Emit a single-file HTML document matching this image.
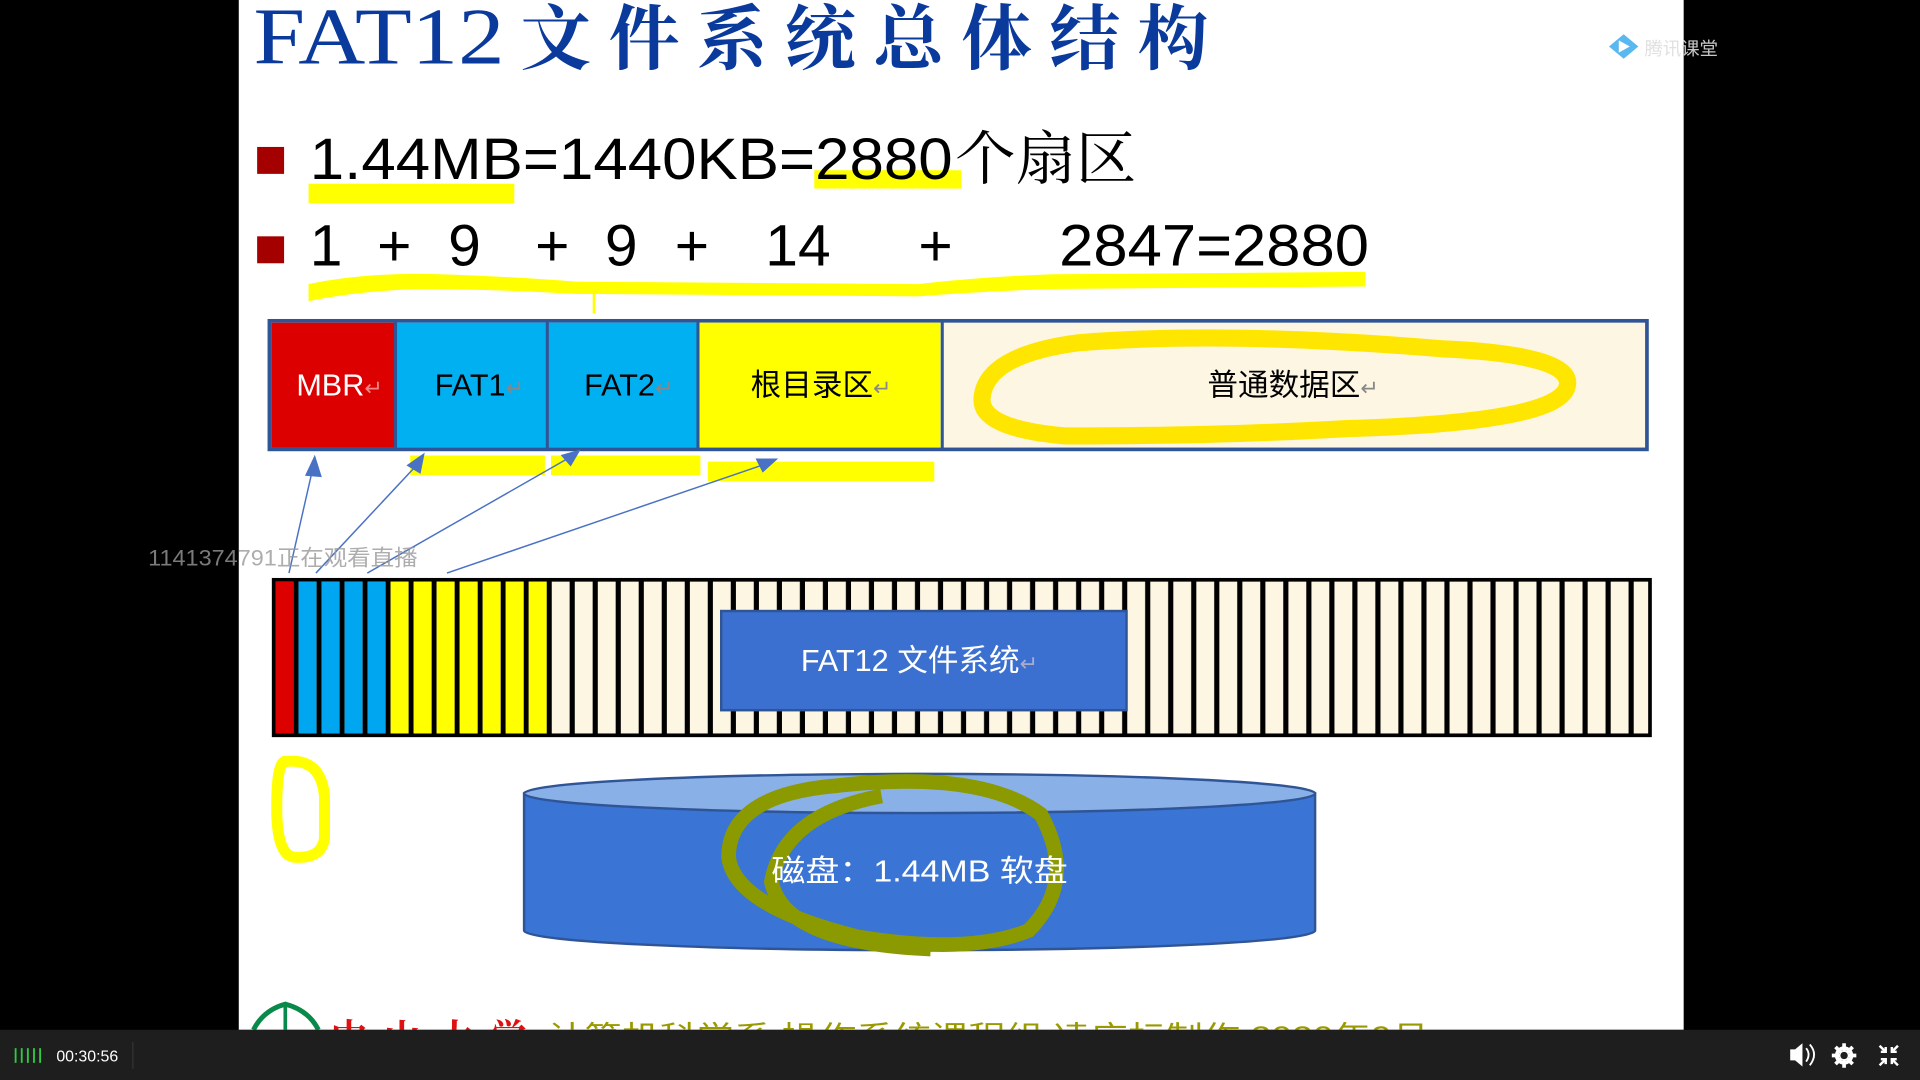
<!DOCTYPE html>
<html><head><meta charset="utf-8"><style>
html,body{margin:0;padding:0;background:#000;width:1920px;height:1080px;overflow:hidden}
svg{display:block}
</style></head><body>
<svg width="1920" height="1080" viewBox="0 0 1568 882" xmlns="http://www.w3.org/2000/svg">
<defs>
<pattern id="cells" patternUnits="userSpaceOnUse" x="223" y="0" width="18.8" height="882">
<rect x="0" y="0" width="18.8" height="882" fill="#000"/>
<rect x="2" y="0" width="14.6" height="882" fill="#fdf6e3"/>
</pattern>
</defs>
<rect width="1568" height="882" fill="#000"/>
<rect x="195" y="0" width="1180" height="841" fill="#fff"/>

<!-- title -->
<text x="207" y="52" font-family="Liberation Serif, serif" font-size="66" fill="#0a3a9c" textLength="205" lengthAdjust="spacingAndGlyphs">FAT12</text>
<text x="425" y="52" font-family="Liberation Serif,'Noto Serif CJK SC',serif" font-size="58" font-weight="bold" fill="#0a3a9c" letter-spacing="14">文件系统总体结构</text>

<!-- watermark logo -->
<path d="M1314 38 L1326 28 L1338 38 L1326 48 Z" fill="#5ab8f0"/>
<path d="M1322 33 L1331 38 L1322 43 Z" fill="#fff"/>
<text x="1343" y="45" font-family="Liberation Sans,'Noto Sans CJK SC',sans-serif" font-size="15" fill="#ddd" opacity="0.9">腾讯课堂</text>

<!-- bullets -->
<rect x="210" y="120" width="22" height="22" fill="#a50000"/>
<rect x="210" y="193" width="22" height="22" fill="#a50000"/>
<rect x="252" y="150" width="168" height="16" fill="#ffff00"/>
<rect x="665" y="139" width="120" height="15" fill="#ffff00"/>
<text x="253" y="146" font-family="Liberation Sans,'Noto Sans CJK SC',sans-serif" font-size="48" fill="#000" textLength="525" lengthAdjust="spacingAndGlyphs">1.44MB=1440KB=2880</text>
<text x="780" y="146" font-family="'Noto Serif CJK SC',serif" font-size="48" fill="#000" textLength="148" lengthAdjust="spacingAndGlyphs">个扇区</text>

<path d="M252 232 Q300 222 360 224 Q420 226 470 230 L750 232 Q800 226 860 224 L1115 222 L1115 234 L860 236 Q800 238 750 242 L470 240 Q400 236 340 236 Q290 238 252 246 Z" fill="#ffff00"/>
<rect x="484" y="240" width="2" height="16" fill="#ffff00"/>
<g font-family="Liberation Sans,sans-serif" font-size="48" fill="#000">
<text x="253" y="217">1</text><text x="308" y="217">+</text><text x="366" y="217">9</text>
<text x="437" y="217">+</text><text x="494" y="217">9</text><text x="551" y="217">+</text>
<text x="625" y="217">14</text><text x="750" y="217">+</text><text x="865" y="217" textLength="253" lengthAdjust="spacingAndGlyphs">2847=2880</text>
</g>

<!-- top block -->
<rect x="220" y="262" width="1125" height="105" fill="#fdf6e3" stroke="#2f5597" stroke-width="3"/>
<rect x="221.5" y="263.5" width="101" height="102" fill="#dd0000"/>
<rect x="324" y="263.5" width="122" height="102" fill="#00b0f0"/>
<rect x="448" y="263.5" width="121" height="102" fill="#00b0f0"/>
<rect x="571" y="263.5" width="197" height="102" fill="#ffff00"/>
<g stroke="#2f5597" stroke-width="2.5"><line x1="323" y1="263" x2="323" y2="366"/><line x1="447" y1="263" x2="447" y2="366"/><line x1="570" y1="263" x2="570" y2="366"/><line x1="769.5" y1="263" x2="769.5" y2="366"/></g>
<path d="M880 280 Q1000 270 1180 285 Q1285 290 1280 315 Q1275 345 1100 350 Q1000 356 870 356 Q800 350 802 325 Q805 290 880 280 Z" fill="none" stroke="#ffe600" stroke-width="14"/>
<g font-family="Liberation Sans,'Noto Sans CJK SC',sans-serif" font-size="25">
<text x="242" y="323" fill="#fff">MBR<tspan fill="#e88" font-size="18">↵</tspan></text>
<text x="355" y="323" fill="#000">FAT1<tspan fill="#888" font-size="18">↵</tspan></text>
<text x="477" y="323" fill="#000">FAT2<tspan fill="#888" font-size="18">↵</tspan></text>
<text x="613" y="323" fill="#000">根目录区<tspan fill="#888" font-size="18">↵</tspan></text>
<text x="986" y="323" fill="#000">普通数据区<tspan fill="#888" font-size="18">↵</tspan></text>
</g>
<rect x="335" y="372" width="110" height="16" fill="#ffff00"/>
<rect x="450" y="372" width="122" height="16" fill="#ffff00"/>
<rect x="578" y="377" width="185" height="16" fill="#ffff00"/>

<!-- arrows -->
<g stroke="#4a72c4" stroke-width="1.2" fill="#4a72c4">
<line x1="236" y1="468" x2="256" y2="380"/><path d="M250 388 L257 373 L262 389 Z"/>
<line x1="258" y1="468" x2="343" y2="377"/><path d="M333 380 L346 371 L343 386 Z"/>
<line x1="300" y1="468" x2="468" y2="372"/><path d="M459 372 L473 368 L466 380 Z"/>
<line x1="365" y1="468" x2="628" y2="378"/><path d="M618 375 L634 375 L623 385 Z"/>
</g>
<text x="121" y="462" font-family="Liberation Sans,'Noto Sans CJK SC',sans-serif" font-size="18" fill="#999" opacity="0.8" textLength="220" lengthAdjust="spacingAndGlyphs">1141374791正在观看直播</text>

<!-- sector strip -->
<rect x="222" y="472" width="1127" height="130" fill="#000"/>
<rect x="225" y="475" width="1121" height="124" fill="url(#cells)"/>
<rect x="225" y="475" width="14.6" height="124" fill="#dd0000"/>
<g fill="#00a6f0"><rect x="243.8" y="475" width="14.6" height="124"/><rect x="262.6" y="475" width="14.6" height="124"/><rect x="281.4" y="475" width="14.6" height="124"/><rect x="300.2" y="475" width="14.6" height="124"/></g>
<g fill="#ffff00"><rect x="319" y="475" width="14.6" height="124"/><rect x="337.8" y="475" width="14.6" height="124"/><rect x="356.6" y="475" width="14.6" height="124"/><rect x="375.4" y="475" width="14.6" height="124"/><rect x="394.2" y="475" width="14.6" height="124"/><rect x="413" y="475" width="14.6" height="124"/><rect x="431.8" y="475" width="14.6" height="124"/></g>
<rect x="589" y="499" width="331" height="81" fill="#3b70d0" stroke="#2f5597" stroke-width="2"/>
<text x="654" y="548" font-family="Liberation Sans,'Noto Sans CJK SC',sans-serif" font-size="25" fill="#fff">FAT12 文件系统<tspan fill="#aac" font-size="18">↵</tspan></text>

<path d="M232 622 Q262 618 265 650 L265 685 Q262 702 240 700 Q226 698 226 660 Q226 625 232 622 Z" fill="none" stroke="#ffff00" stroke-width="9"/>

<!-- cylinder -->
<path d="M428 648 L428 760 A323 16 0 0 0 1074 760 L1074 648 Z" fill="#3a74d4" stroke="#2f5597" stroke-width="2"/>
<ellipse cx="751" cy="648" rx="323" ry="16" fill="#8ab0e8" stroke="#2f5597" stroke-width="2"/>
<path d="M680 642 Q800 628 850 665 Q880 720 840 760 Q790 780 700 765 Q600 740 595 700 Q595 650 680 642 M720 650 Q640 665 630 720 Q640 770 760 775" fill="none" stroke="#8b9a00" stroke-width="12"/>
<text x="630" y="720" font-family="Liberation Sans,'Noto Sans CJK SC',sans-serif" font-size="25" fill="#fff" textLength="242" lengthAdjust="spacingAndGlyphs">磁盘：1.44MB 软盘</text>

<!-- footer -->
<path d="M207 841 Q215 825 233 820 Q252 825 260 841" fill="none" stroke="#0a8a4a" stroke-width="4"/>
<line x1="233" y1="822" x2="233" y2="841" stroke="#0a8a4a" stroke-width="3"/>
<text x="270" y="858" font-family="'Noto Serif CJK SC',serif" font-size="30" font-weight="bold" fill="#e01010" textLength="160" lengthAdjust="spacing">中山大学</text>
<text x="447" y="855" font-family="Liberation Sans,'Noto Sans CJK SC',sans-serif" font-size="24" fill="#9a9a00" textLength="720" lengthAdjust="spacingAndGlyphs">计算机科学系 操作系统课程组 凌应标制作 2020年9月</text>

<!-- bottom bar -->
<rect x="0" y="841" width="1568" height="41" fill="#1e1e1e"/>
<g fill="#2ecc40"><rect x="12" y="856" width="1.5" height="12"/><rect x="17" y="856" width="1.5" height="12"/><rect x="22" y="856" width="1.5" height="12"/><rect x="27" y="856" width="1.5" height="12"/><rect x="32" y="856" width="1.5" height="12"/></g>
<text x="46" y="867" font-family="Liberation Sans,sans-serif" font-size="13" fill="#fff">00:30:56</text>
<rect x="108" y="851" width="1" height="22" fill="#333"/>
<path d="M1462 857 h4 l6 -5 v19 l-6 -5 h-4 Z" fill="#fff"/>
<path d="M1475 856 q4 5 0 11 M1478 853 q7 8 0 17" stroke="#fff" stroke-width="1.5" fill="none"/>
<circle cx="1506" cy="862" r="6" fill="none" stroke="#fff" stroke-width="3"/>
<g stroke="#fff" stroke-width="3"><line x1="1506" y1="852" x2="1506" y2="872"/><line x1="1496" y1="862" x2="1516" y2="862"/><line x1="1499" y1="855" x2="1513" y2="869"/><line x1="1513" y1="855" x2="1499" y2="869"/></g>
<circle cx="1506" cy="862" r="3" fill="#1e1e1e"/>
<g stroke="#fff" stroke-width="2" fill="none"><path d="M1535 854 l5 5 M1540 855 v4 h-4"/><path d="M1550 854 l-5 5 M1545 855 v4 h4"/><path d="M1535 870 l5 -5 M1540 869 v-4 h-4"/><path d="M1550 870 l-5 -5 M1545 869 v-4 h4"/></g>
</svg>
</body></html>
